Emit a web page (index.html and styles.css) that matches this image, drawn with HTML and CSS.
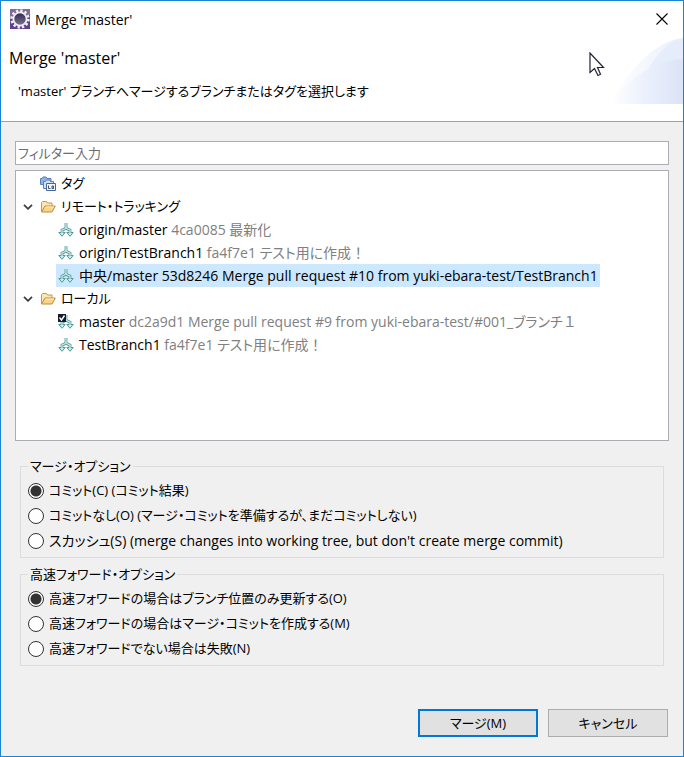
FILE: index.html
```html
<!DOCTYPE html>
<html lang="ja">
<head>
<meta charset="utf-8">
<title>Merge 'master'</title>
<link rel="stylesheet" href="styles.css">
</head>
<body>
<svg class="defs" aria-hidden="true">
  <symbol id="branch" viewBox="0 0 16 16">
    <path d="M8 1v4.500Q7.500 7 4 8v3M8 5.500Q8.500 7 12 8v3" fill="none" stroke="#5b9797" stroke-width="2.800"/>
    <path d="M.8 10.500h6.400L4 14.300zM8.800 10.500h6.400L12 14.300z" fill="#b5efef" stroke="#5b9797" stroke-linejoin="round"/>
    <path d="M8 1v4.500Q7.500 7 4 8v4.500M8 5.500Q8.500 7 12 8v4.500" fill="none" stroke="#c9f4f4" stroke-width="1.200"/>
  </symbol>
  <symbol id="folder" viewBox="0 0 16 16">
    <path d="M1.500 12.500v-9l1-1h4l1 1.500h4.500v3" fill="#fbe6b4" stroke="#c9964a"/>
    <path d="M1.500 13 5 7h10.300L12 13z" fill="#f7d48a" stroke="#c28a3a" stroke-linejoin="round"/>
    <path d="M5.500 8h8.500" stroke="#fdedc8"/>
  </symbol>
  <symbol id="arrow" viewBox="0 0 10 6">
    <path d="m1 .8 4 4 4-4" fill="none" stroke="#404040" stroke-width="1.800"/>
  </symbol>
</svg>
<main class="dialog">
  <header class="banner">
    <div class="titlebar">
      <svg class="app-icon" viewBox="0 0 20 20" aria-hidden="true">
        <defs><linearGradient id="disc" x2="0" y2="1"><stop offset="0" stop-color="#2c2450"/><stop offset="1" stop-color="#7d7792"/></linearGradient></defs>
        <rect width="20" height="20" fill="#5e3f92"/>
        <path d="M0 0h20v6L0 10z" fill="#7c6c9c"/>
        <circle cx="10" cy="10" r="8.400" fill="none" stroke="#efedf2" stroke-width="2.600" stroke-dasharray="2.400 1.998"/>
        <circle cx="10" cy="10" r="6.600" fill="url(#disc)" stroke="#efedf2" stroke-width="1.800"/>
      </svg>
      <span class="window-title">Merge 'master'</span>
      <button class="close" type="button" aria-label="閉じる">
        <svg viewBox="0 0 12 12" aria-hidden="true"><path d="m.5.5 11 11M11.500.5l-11 11" stroke="#000" stroke-width="1.100"/></svg>
      </button>
    </div>
    <h1>Merge 'master'</h1>
    <p>'master' ブランチへマージするブランチまたはタグを選択します</p>
    <svg class="swoosh" viewBox="0 0 73 66" aria-hidden="true">
      <defs>
        <linearGradient id="g1"><stop offset="0" stop-color="#fff"/><stop offset="1" stop-color="#e9effb"/></linearGradient>
        <linearGradient id="g2"><stop offset="0" stop-color="#fff"/><stop offset=".5" stop-color="#eaf0fc"/><stop offset="1" stop-color="#dbe3f6"/></linearGradient>
      </defs>
      <path d="M0 66C20 30 45 3 73 0v66z" fill="url(#g1)"/>
      <path d="M38 32C47 15 58 4 73 0v21Q54 23 38 32z" fill="#e3eaf9" fill-opacity=".7"/>
      <path d="M0 66C15 44 42 22 73 21v45z" fill="url(#g2)"/>
    </svg>
    <svg class="pointer" viewBox="0 0 16 25" aria-hidden="true">
      <path d="M1 1v19.500l4.500-4 3.500 7 2.500-1.200-3-6.800H14.500z" fill="#fff" stroke="#223" stroke-width="1.200"/>
    </svg>
  </header>
  <form class="content">
    <input class="filter" type="text" placeholder="フィルター入力" aria-label="フィルター入力">
    <ul class="tree">
      <li><div class="row group"><span class="twist"></span>
        <svg class="icon" viewBox="0 0 16 16" aria-hidden="true">
          <path d="M.5 8.500v-6h1.500l1-1.500h3l1 1.500h4v6z" fill="#8fb2e2" stroke="#5a80bb"/>
          <path d="M3.500 12.500v-7h2l1-1.500h3l1 1.500h3v7z" fill="#cfe0f7" stroke="#5a80bb"/>
          <path d="M6.500 14.500v-7h9v7z" fill="#f2f7ff" stroke="#46659c"/>
          <path d="M8.500 9.500v3h2M12 10h1.500v2.500H12z" fill="none" stroke="#263c69" stroke-width=".9"/>
        </svg><span class="label">タグ</span></div></li>
      <li><div class="row group"><svg class="twist"><use href="#arrow"/></svg><svg class="icon"><use href="#folder"/></svg><span class="label">リモート・トラッキング</span></div>
        <ul>
          <li><div class="row"><svg class="icon"><use href="#branch"/></svg><span class="label">origin/master <small>4ca0085 最新化</small></span></div></li>
          <li><div class="row"><svg class="icon"><use href="#branch"/></svg><span class="label">origin/TestBranch1 <small>fa4f7e1 テスト用に作成<span class="wide">！</span></small></span></div></li>
          <li><div class="row selected"><svg class="icon"><use href="#branch"/></svg><span class="label">中央/master 53d8246 Merge pull request #10 from yuki-ebara-test/TestBranch1</span></div></li>
        </ul></li>
      <li><div class="row group"><svg class="twist"><use href="#arrow"/></svg><svg class="icon"><use href="#folder"/></svg><span class="label">ローカル</span></div>
        <ul>
          <li><div class="row"><svg class="icon" viewBox="0 0 16 16"><use href="#branch"/><path d="M0 0h8v8H0z" fill="#171b2c"/><path d="m1.500 3.500 2 2.500 3-4.500" fill="none" stroke="#fff" stroke-width="1.400"/></svg><span class="label">master <small>dc2a9d1 Merge pull request #9 from yuki-ebara-test/#001_ブランチ<span class="wide">１</span></small></span></div></li>
          <li><div class="row"><svg class="icon"><use href="#branch"/></svg><span class="label">TestBranch1 <small>fa4f7e1 テスト用に作成<span class="wide">！</span></small></span></div></li>
        </ul></li>
    </ul>
    <fieldset>
      <legend>マージ・オプション</legend>
      <label class="compact"><input type="radio" name="merge" checked>コミット(C) (コミット結果)</label>
      <label class="compact"><input type="radio" name="merge">コミットなし(O) (マージ・コミットを準備するが、まだコミットしない)</label>
      <label><input type="radio" name="merge">スカッシュ(S) (merge changes into working tree, but don't create merge commit)</label>
    </fieldset>
    <fieldset>
      <legend>高速フォワード・オプション</legend>
      <label class="compact"><input type="radio" name="ff" checked>高速フォワードの場合はブランチ位置のみ更新する(O)</label>
      <label class="compact"><input type="radio" name="ff">高速フォワードの場合はマージ・コミットを作成する(M)</label>
      <label class="compact"><input type="radio" name="ff">高速フォワードでない場合は失敗(N)</label>
    </fieldset>
    <div class="actions">
      <button class="primary" type="button">マージ(M)</button>
      <button type="button">キャンセル</button>
    </div>
  </form>
</main>
</body>
</html>
```
FILE: styles.css
```css
* { box-sizing: border-box; }
body {
  margin: 0;
  background: #f0f0f0;
  color: #000;
  font: 14px/23px "Open Sans", "Noto Sans CJK JP", sans-serif;
  font-feature-settings: "palt";
}
button, input { font: inherit; font-feature-settings: inherit; color: inherit; }
.defs { position: absolute; width: 0; height: 0; }
.dialog {
  display: flex;
  flex-direction: column;
  min-height: 100vh;
  border: 1px solid #1883d7;
}
.banner {
  position: relative;
  height: 121px;
  background: #fff;
  border-bottom: 1px solid #a0a0a0;
}
.titlebar {
  display: flex;
  align-items: center;
  height: 36px;
  padding: 0 7px 0 9px;
}
.app-icon { width: 20px; height: 20px; }
.window-title { flex: 1; padding-left: 5px; }
.close {
  display: grid;
  place-items: center;
  width: 28px;
  height: 28px;
  padding: 0;
  border: 0;
  background: none;
}
.close svg { width: 12px; height: 12px; }
h1 {
  margin: 9px 8px 0;
  font-size: 16px;
  line-height: 24px;
  font-weight: 400;
}
p { margin: 10px 17px 0; }
p, .group, legend, .compact, .filter, .actions button { font-size: 13px; }
.swoosh { position: absolute; right: 0; top: 37px; width: 73px; height: 66px; }
.pointer { position: absolute; right: 78px; top: 51px; width: 16px; height: 25px; }
.content {
  display: flex;
  flex: 1;
  flex-direction: column;
  padding: 19px 14px;
}
.filter {
  height: 24px;
  padding: 0 2px;
  border: 1px solid #abadb3;
  background: #fff;
}
.filter::placeholder { color: #6d6d6d; opacity: 1; }
ul { margin: 0; padding: 0; list-style: none; }
.tree {
  height: 271px;
  margin: 5px 0 15px;
  padding-top: 1px;
  overflow: auto;
  border: 1px solid #abadb3;
  background: #fff;
}
.tree > li > .row { padding-left: 7px; }
.tree ul { padding-left: 40px; }
.row {
  display: flex;
  align-items: center;
  width: max-content;
  height: 23px;
  padding-right: 2px;
}
.selected { background: #cce8ff; }
.twist { width: 10px; height: 6px; margin-right: 7px; }
.icon { width: 16px; height: 16px; }
.tree ul .icon { margin-left: 2px; }
.label { padding-left: 5px; white-space: nowrap; }
.label small { color: #808080; font-size: inherit; }
.wide { font-feature-settings: normal; }
fieldset {
  min-width: 0;
  margin: 0 5px 6px;
  padding: 2px 7px 4px;
  border: 1px solid #dcdcdc;
}
legend { padding: 0 2px; line-height: 20px; }
label {
  display: flex;
  align-items: center;
  height: 25px;
}
input[type="radio"] {
  flex: none;
  appearance: none;
  width: 16px;
  height: 16px;
  margin: 0 5px 0 0;
  border: 1px solid #333;
  border-radius: 50%;
  background: #fff;
}
input[type="radio"]:checked {
  background: radial-gradient(circle, #333 5px, #fff 6px);
}
.actions {
  display: flex;
  justify-content: flex-end;
  gap: 10px;
  margin-top: auto;
  padding-right: 1px;
}
.actions button {
  width: 120px;
  height: 28px;
  padding: 0;
  border: 1px solid #adadad;
  background: #e1e1e1;
}
.actions .primary { border: 2px solid #0078d7; }
```
